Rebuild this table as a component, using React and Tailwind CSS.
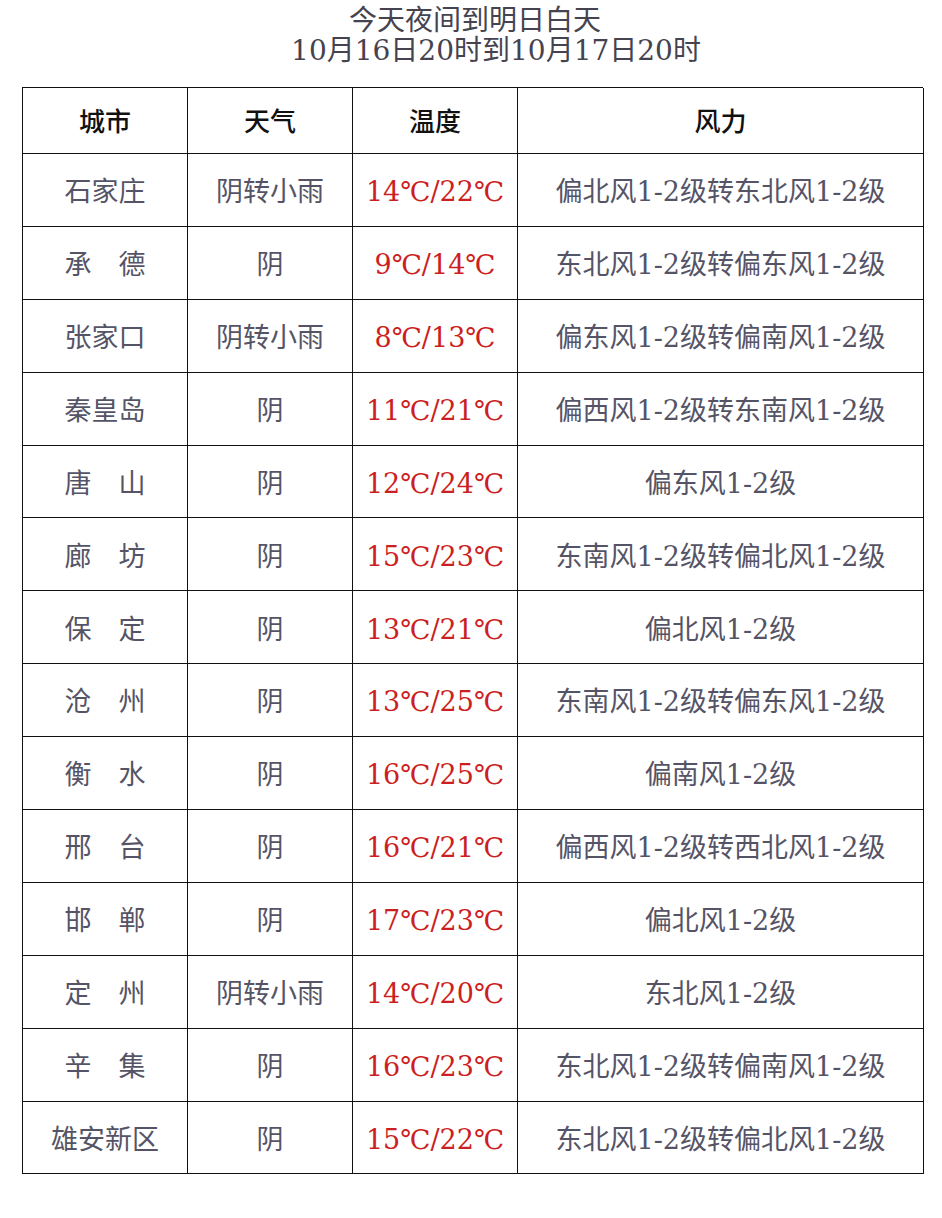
const rows = [
  ['石家庄', '阴转小雨', '14℃/22℃', '偏北风1-2级转东北风1-2级'],
  ['承　德', '阴', '9℃/14℃', '东北风1-2级转偏东风1-2级'],
  ['张家口', '阴转小雨', '8℃/13℃', '偏东风1-2级转偏南风1-2级'],
  ['秦皇岛', '阴', '11℃/21℃', '偏西风1-2级转东南风1-2级'],
  ['唐　山', '阴', '12℃/24℃', '偏东风1-2级'],
  ['廊　坊', '阴', '15℃/23℃', '东南风1-2级转偏北风1-2级'],
  ['保　定', '阴', '13℃/21℃', '偏北风1-2级'],
  ['沧　州', '阴', '13℃/25℃', '东南风1-2级转偏东风1-2级'],
  ['衡　水', '阴', '16℃/25℃', '偏南风1-2级'],
  ['邢　台', '阴', '16℃/21℃', '偏西风1-2级转西北风1-2级'],
  ['邯　郸', '阴', '17℃/23℃', '偏北风1-2级'],
  ['定　州', '阴转小雨', '14℃/20℃', '东北风1-2级'],
  ['辛　集', '阴', '16℃/23℃', '东北风1-2级转偏南风1-2级'],
  ['雄安新区', '阴', '15℃/22℃', '东北风1-2级转偏北风1-2级'],
];

const font = { fontFamily: '"DejaVu Serif", "Noto Sans CJK SC", serif' };

const Cell = ({ children, className = '' }) => (
  <div className={`flex items-center justify-center border-r border-b border-[#111] ${className}`}>
    {children}
  </div>
);

export default function App() {
  return (
    <div className="w-[942px] h-[1218px] bg-white" style={font}>
      <div className="pt-[6px] h-[87px] text-[28px] leading-[30px] text-[#45434f] text-center">
        <div className="pl-[8px]">今天夜间到明日白天</div>
        <div className="pl-[50px]">10月16日20时到10月17日20时</div>
      </div>
      <div className="ml-[22px] w-[901px] border-l border-t border-[#111] grid grid-cols-[165px_165px_165px_406px]">
        {['城市', '天气', '温度', '风力'].map((h) => (
          <Cell key={h} className="h-[66px] pt-[4px] text-[26px] text-[#111] font-medium">
            {h}
          </Cell>
        ))}
        {rows.map((r, i) => (
          <div key={i} className="contents">
            <Cell className="h-[72.9px] pt-[5px] text-[27px] text-[#555466]">{r[0]}</Cell>
            <Cell className="h-[72.9px] pt-[5px] text-[27px] text-[#555466]">{r[1]}</Cell>
            <Cell className="h-[72.9px] pt-[5px] text-[27px] text-[#cc1f22]">{r[2]}</Cell>
            <Cell className="h-[72.9px] pt-[5px] text-[27px] text-[#555466]">{r[3]}</Cell>
          </div>
        ))}
      </div>
    </div>
  );
}
